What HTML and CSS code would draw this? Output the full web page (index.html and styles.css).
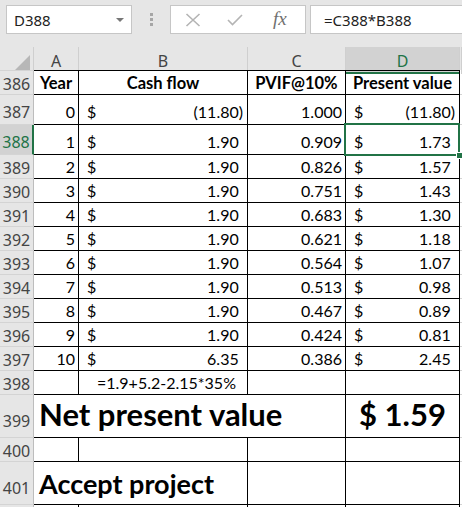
FILE: index.html
```html
<!DOCTYPE html>
<html lang="en">

<head>
    <meta charset="UTF-8">
    <title>NPV sheet</title>
    <link rel="stylesheet" href="styles.css">
</head>

<body>

    <div class="formula-bar">
        <div class="name-box">
            <span>D388</span>
            <svg class="caret" width="8" height="5" viewBox="0 0 8 5"><path d="M0 0H8L4 4Z" fill="#777"/></svg>
        </div>
        <div class="grip"><i></i><i></i><i></i></div>
        <div class="fx-buttons">
            <svg width="16" height="14" viewBox="0 0 16 14"><path d="M1.5 1L14.5 13M14.5 1L1.5 13" stroke="#b4b4b4" stroke-width="1.6" fill="none"/></svg>
            <svg width="16" height="12" viewBox="0 0 16 12"><path d="M1 6L5.5 10.5L15 1" stroke="#b4b4b4" stroke-width="1.6" fill="none"/></svg>
            <span class="fx">fx</span>
        </div>
        <div class="formula-input">=C388*B388</div>
    </div>

    <div class="sheet">
        <div class="row col-heads">
            <div class="corner"><svg width="17" height="17" viewBox="0 0 17 17"><path d="M17 0V17H0Z" fill="#b7b7b7"/></svg></div>
            <div class="col-head">A</div>
            <div class="col-head">B</div>
            <div class="col-head">C</div>
            <div class="col-head active">D</div>
            <div class="col-head"></div>
        </div>

        <div class="row r24 first">
            <div class="row-head">386</div>
            <div class="cell bold center">Year</div>
            <div class="cell bold center">Cash flow</div>
            <div class="cell bold center">PVIF@10%</div>
            <div class="cell bold center">Present value</div>
            <div class="cell blank"></div>
        </div>

        <div class="row r30">
            <div class="row-head">387</div>
            <div class="cell num">0</div>
            <div class="cell money"><span>$</span><span>(11.80)</span></div>
            <div class="cell num">1.000</div>
            <div class="cell money"><span>$</span><span>(11.80)</span></div>
            <div class="cell blank"></div>
        </div>

        <div class="row r30">
            <div class="row-head active">388</div>
            <div class="cell num">1</div>
            <div class="cell money"><span>$</span><span>1.90<i class="pad">)</i></span></div>
            <div class="cell num">0.909</div>
            <div class="cell money selected">
                <span>$</span><span>1.73<i class="pad">)</i></span>
                <div class="selection"><b class="handle"></b></div>
            </div>
            <div class="cell blank"></div>
        </div>

        <div class="row r24">
            <div class="row-head">389</div>
            <div class="cell num">2</div>
            <div class="cell money"><span>$</span><span>1.90<i class="pad">)</i></span></div>
            <div class="cell num">0.826</div>
            <div class="cell money"><span>$</span><span>1.57<i class="pad">)</i></span></div>
            <div class="cell blank"></div>
        </div>

        <div class="row r24">
            <div class="row-head">390</div>
            <div class="cell num">3</div>
            <div class="cell money"><span>$</span><span>1.90<i class="pad">)</i></span></div>
            <div class="cell num">0.751</div>
            <div class="cell money"><span>$</span><span>1.43<i class="pad">)</i></span></div>
            <div class="cell blank"></div>
        </div>

        <div class="row r24">
            <div class="row-head">391</div>
            <div class="cell num">4</div>
            <div class="cell money"><span>$</span><span>1.90<i class="pad">)</i></span></div>
            <div class="cell num">0.683</div>
            <div class="cell money"><span>$</span><span>1.30<i class="pad">)</i></span></div>
            <div class="cell blank"></div>
        </div>

        <div class="row r24">
            <div class="row-head">392</div>
            <div class="cell num">5</div>
            <div class="cell money"><span>$</span><span>1.90<i class="pad">)</i></span></div>
            <div class="cell num">0.621</div>
            <div class="cell money"><span>$</span><span>1.18<i class="pad">)</i></span></div>
            <div class="cell blank"></div>
        </div>

        <div class="row r24">
            <div class="row-head">393</div>
            <div class="cell num">6</div>
            <div class="cell money"><span>$</span><span>1.90<i class="pad">)</i></span></div>
            <div class="cell num">0.564</div>
            <div class="cell money"><span>$</span><span>1.07<i class="pad">)</i></span></div>
            <div class="cell blank"></div>
        </div>

        <div class="row r24">
            <div class="row-head">394</div>
            <div class="cell num">7</div>
            <div class="cell money"><span>$</span><span>1.90<i class="pad">)</i></span></div>
            <div class="cell num">0.513</div>
            <div class="cell money"><span>$</span><span>0.98<i class="pad">)</i></span></div>
            <div class="cell blank"></div>
        </div>

        <div class="row r24">
            <div class="row-head">395</div>
            <div class="cell num">8</div>
            <div class="cell money"><span>$</span><span>1.90<i class="pad">)</i></span></div>
            <div class="cell num">0.467</div>
            <div class="cell money"><span>$</span><span>0.89<i class="pad">)</i></span></div>
            <div class="cell blank"></div>
        </div>

        <div class="row r24">
            <div class="row-head">396</div>
            <div class="cell num">9</div>
            <div class="cell money"><span>$</span><span>1.90<i class="pad">)</i></span></div>
            <div class="cell num">0.424</div>
            <div class="cell money"><span>$</span><span>0.81<i class="pad">)</i></span></div>
            <div class="cell blank"></div>
        </div>

        <div class="row r24">
            <div class="row-head">397</div>
            <div class="cell num">10</div>
            <div class="cell money"><span>$</span><span>6.35<i class="pad">)</i></span></div>
            <div class="cell num">0.386</div>
            <div class="cell money"><span>$</span><span>2.45<i class="pad">)</i></span></div>
            <div class="cell blank"></div>
        </div>

        <div class="row r24">
            <div class="row-head">398</div>
            <div class="cell"></div>
            <div class="cell note">=1.9+5.2-2.15*35%</div>
            <div class="cell"></div>
            <div class="cell"></div>
            <div class="cell blank"></div>
        </div>

        <div class="row r43">
            <div class="row-head">399</div>
            <div class="cell big larger span3">Net present value</div>
            <div class="cell big larger center">$&nbsp;1.59</div>
            <div class="cell blank"></div>
        </div>

        <div class="row r24">
            <div class="row-head">400</div>
            <div class="cell"></div>
            <div class="cell"></div>
            <div class="cell"></div>
            <div class="cell"></div>
            <div class="cell blank"></div>
        </div>

        <div class="row r43">
            <div class="row-head">401</div>
            <div class="cell big span2">Accept project</div>
            <div class="cell"></div>
            <div class="cell"></div>
            <div class="cell blank"></div>
        </div>

        <div class="row r24">
            <div class="row-head"></div>
            <div class="cell"></div>
            <div class="cell"></div>
            <div class="cell"></div>
            <div class="cell"></div>
            <div class="cell blank"></div>
        </div>
    </div>

</body>

</html>
```

FILE: styles.css
```css
* {
    margin: 0;
    padding: 0;
    box-sizing: border-box;
}

body {
    width: 462px;
    height: 507px;
    overflow: hidden;
    background-color: #ffffff;
    font-family: "Noto Sans", sans-serif;
}

/* formula bar */

.formula-bar {
    height: 47px;
    background-color: #e6e6e6;
    display: flex;
    align-items: flex-start;
    padding-top: 5px;
}

.name-box {
    width: 126px;
    height: 29px;
    margin-left: 6px;
    background-color: #ffffff;
    border: 1px solid #c6c6c6;
    display: flex;
    align-items: center;
    justify-content: space-between;
    padding: 0 7px 0 7px;
    font-size: 15px;
    color: #222;
}

.caret {
    margin-top: 1px;
}

.grip {
    width: 38px;
    height: 29px;
    display: flex;
    flex-direction: column;
    align-items: center;
    justify-content: center;
    gap: 2px;
}

.grip i {
    display: block;
    width: 3px;
    height: 3px;
    background-color: #a6a6a6;
}

.fx-buttons {
    width: 136px;
    height: 29px;
    background-color: #ffffff;
    border: 1px solid #c6c6c6;
    display: flex;
    align-items: center;
    padding-left: 14px;
    gap: 26px;
}

.fx {
    font-family: "Liberation Serif", serif;
    font-style: italic;
    font-size: 19px;
    color: #707070;
    margin-left: 4px;
    margin-top: -2px;
}

.formula-input {
    flex: 1;
    height: 29px;
    margin-left: 4px;
    background-color: #ffffff;
    border: 1px solid #c6c6c6;
    border-right: none;
    display: flex;
    align-items: center;
    padding-left: 13px;
    font-size: 15px;
    color: #222;
}

/* grid */

.row {
    display: grid;
    grid-template-columns: 34px 45px 169px 98px 114px 1fr;
}

.col-heads {
    height: 23px;
    background-color: #e6e6e6;
}

.corner {
    border-right: 1px solid #cfcfcf;
    display: flex;
    align-items: flex-end;
    justify-content: flex-end;
    padding: 0 3px 2px 0;
}

.col-head {
    border-right: 1px solid #cfcfcf;
    display: flex;
    align-items: center;
    justify-content: center;
    font-size: 16px;
    color: #444;
    padding-top: 1px;
}

.col-head.active {
    background-color: #d2d2d2;
    color: #217346;
    border-bottom: 2px solid #217346;
    padding-top: 3px;
}

.r24 {
    height: 24px;
}

.r30 {
    height: 30px;
}

.r43 {
    height: 43px;
}

.first {
    height: 25px;
}

.row-head {
    background-color: #e6e6e6;
    border-right: 1px solid #bdbdbd;
    border-bottom: 1px solid #d4d4d4;
    display: flex;
    align-items: flex-end;
    justify-content: center;
    font-size: 16px;
    line-height: 16px;
    color: #444;
    padding-bottom: 2px;
}

.row-head.active {
    background-color: #d2d2d2;
    color: #217346;
    border-right: 2px solid #217346;
}

.first .row-head {
    border-top: 1px solid #d4d4d4;
}

.r30 .row-head {
    padding-bottom: 4px;
}

.r43 .row-head {
    padding-bottom: 8px;
}

.cell {
    border-right: 1px solid #000;
    border-bottom: 1px solid #000;
    display: flex;
    align-items: flex-end;
    font-family: Lato, sans-serif;
    font-size: 16px;
    line-height: 16px;
    color: #000;
    padding-bottom: 3px;
    white-space: nowrap;
}

.first .cell {
    border-top: 1px solid #000;
}

.r30 .cell {
    padding-bottom: 4px;
}

.cell.blank {
    border-right: none;
    border-bottom: 1px solid #d4d4d4;
}

.first .cell.blank {
    border-top: none;
}

.bold {
    font-weight: 700;
    font-size: 16.5px;
}

.center {
    justify-content: center;
}

.num {
    justify-content: flex-end;
    padding-right: 3px;
}

.money {
    justify-content: space-between;
    padding-left: 8px;
    padding-right: 4px;
}

.pad {
    visibility: hidden;
    font-style: normal;
}

.note {
    padding-left: 18px;
}

.big {
    font-size: 27px;
    line-height: 27px;
    font-weight: 700;
    padding-bottom: 7px;
}

.big.larger {
    font-size: 31px;
    line-height: 31px;
    padding-bottom: 7px;
}

.span3 {
    grid-column: span 3;
    padding-left: 5px;
}

.span2 {
    grid-column: span 2;
    padding-left: 5px;
}

/* active cell */

.selected {
    position: relative;
}

.selection {
    position: absolute;
    left: -2px;
    top: -2px;
    width: 116px;
    height: 33px;
    border: 2px solid #217346;
}

.handle {
    position: absolute;
    right: -5px;
    bottom: -5px;
    width: 7px;
    height: 7px;
    background-color: #217346;
    border: 1px solid #ffffff;
}
```
